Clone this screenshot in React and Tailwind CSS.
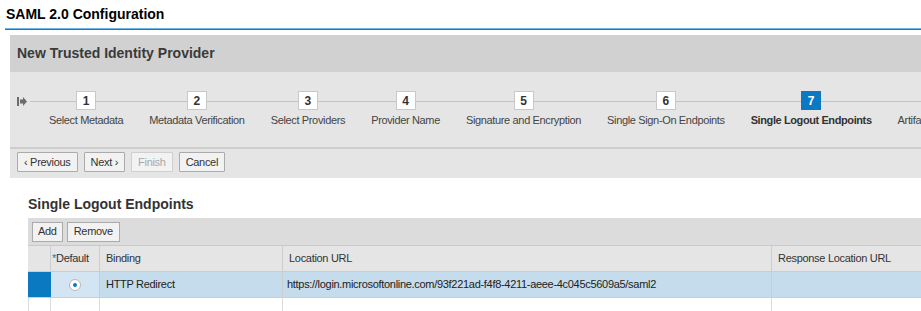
import React from 'react';

const steps = [
  'Select Metadata',
  'Metadata Verification',
  'Select Providers',
  'Provider Name',
  'Signature and Encryption',
  'Single Sign-On Endpoints',
  'Single Logout Endpoints',
  'Artifact Endpoints',
];

function Step({ n, label, active }) {
  return (
    <div className="flex flex-col items-center shrink-0">
      <div
        className={
          active
            ? 'w-[20px] h-[19px] flex items-center justify-center bg-[#0a79c1] text-white text-[12px] font-bold'
            : 'w-[20px] h-[19px] flex items-center justify-center bg-white border border-[#c8c8c8] text-[#333] text-[12px] font-bold'
        }
      >
        {n}
      </div>
      <div
        className={
          active
            ? 'mt-[3px] text-[11px] tracking-[-0.4px] leading-[14px] font-bold text-[#333]'
            : 'mt-[3px] text-[11px] tracking-[-0.35px] leading-[14px] text-[#444]'
        }
      >
        {label}
      </div>
    </div>
  );
}

function Btn({ children, disabled }) {
  return (
    <button
      className={
        'h-[20px] px-[6px] text-[11px] tracking-[-0.3px] leading-[18px] border rounded-[1px] bg-[#f2f2f2] ' +
        (disabled ? 'border-[#cfcfcf] text-[#a8a8a8]' : 'border-[#ababab] text-[#333]')
      }
    >
      {children}
    </button>
  );
}

export default function App() {
  return (
    <div className="w-[921px] h-[311px] overflow-hidden bg-white font-['Liberation_Sans',Arial,sans-serif] text-[#333]">
      <div className="pl-[6px] pt-[6px] h-[28px] text-[14px] leading-[16px] font-bold text-black">SAML 2.0 Configuration</div>
      <div className="ml-[5px] border-t border-[#6fb6e8] h-[2px] bg-[#107ec8]" />

      <div className="ml-[10px] mt-[5px]">
        <div className="h-[37px] bg-[#d1d1d1] pl-[7px] flex items-center text-[14px] font-bold text-[#3a3a3a]">
          New Trusted Identity Provider
        </div>
        <div className="bg-[#e5e5e5]">
          <div className="relative h-[75px] overflow-hidden">
            <div className="absolute left-[20px] right-0 top-[29px] h-[1px] bg-[#c4c4c4]" />
            <svg className="absolute left-[7px] top-[25px]" width="10" height="9" viewBox="0 0 10 9">
              <rect x="0" y="0" width="2" height="9" fill="#6b6b6b" />
              <path d="M3 2.5 H6 V0 L10 4.5 L6 9 V6.5 H3 Z" fill="#6b6b6b" />
            </svg>
            <div className="relative flex gap-[26px] pl-[39px] pt-[19px]">
              {steps.map((s, i) => (
                <Step key={s} n={i + 1} label={s} active={i === 6} />
              ))}
            </div>
          </div>
          <div className="h-[2px] bg-[#cdcdcd]" />
          <div className="flex gap-[6px] pl-[7px] pt-[3px] pb-[6px]">
            <Btn>‹ Previous</Btn>
            <Btn>Next ›</Btn>
            <Btn disabled>Finish</Btn>
            <Btn>Cancel</Btn>
          </div>
        </div>
      </div>

      <div className="ml-[28px] mt-[18px]">
        <div className="text-[14px] leading-[17px] font-bold text-[#333] pb-[5px]">Single Logout Endpoints</div>
        <div className="h-[28px] bg-[#dcdcdc] border-b border-[#c9c9c9] flex items-center gap-[4px] pl-[4px] text-[11px] tracking-[-0.3px]">
          <button className="h-[20px] px-[5px] border border-[#ababab] bg-[#f2f2f2] text-[#333]">Add</button>
          <button className="h-[20px] px-[6px] border border-[#ababab] bg-[#f2f2f2] text-[#333]">Remove</button>
        </div>
        <div className="grid grid-cols-[23px_49px_183px_489px_1fr] text-[11px] tracking-[-0.3px]">
          <div className="h-[26px] bg-[#e5e5e5] border-r border-b border-[#cdcdcd]" />
          <div className="h-[26px] bg-[#e5e5e5] border-r border-b border-[#cdcdcd] flex items-center pl-[1px]">
            <span className="text-[#0a79c1]">*</span>Default
          </div>
          <div className="h-[26px] bg-[#e5e5e5] border-r border-b border-[#cdcdcd] flex items-center pl-[6px]">Binding</div>
          <div className="h-[26px] bg-[#e5e5e5] border-r border-b border-[#cdcdcd] flex items-center pl-[6px]">Location URL</div>
          <div className="h-[26px] bg-[#e5e5e5] border-b border-[#cdcdcd] flex items-center pl-[6px]">Response Location URL</div>

          <div className="h-[26px] bg-[#0a79c1] border-b border-[#cdcdcd]" />
          <div className="h-[26px] bg-[#d3e5f2] border-r border-b border-[#cdcdcd] flex items-center justify-center">
            <div className="w-[12px] h-[12px] rounded-full bg-white border border-[#b8b8b8] flex items-center justify-center">
              <div className="w-[4px] h-[4px] rounded-full bg-[#0a79c1]" />
            </div>
          </div>
          <div className="h-[26px] bg-[#c5dcec] border-r border-b border-[#cdcdcd] flex items-center pl-[6px] text-[#222]">HTTP Redirect</div>
          <div className="h-[26px] bg-[#c5dcec] border-r border-b border-[#cdcdcd] flex items-center pl-[4px] text-[#222]">
            https://login.microsoftonline.com/93f221ad-f4f8-4211-aeee-4c045c5609a5/saml2
          </div>
          <div className="h-[26px] bg-[#c5dcec] border-b border-[#cdcdcd]" />

          <div className="h-[26px] border-r border-l border-[#dcdcdc]" />
          <div className="h-[26px] border-r border-[#dcdcdc]" />
          <div className="h-[26px] border-r border-[#dcdcdc]" />
          <div className="h-[26px] border-r border-[#dcdcdc]" />
          <div className="h-[26px]" />
        </div>
      </div>
    </div>
  );
}
